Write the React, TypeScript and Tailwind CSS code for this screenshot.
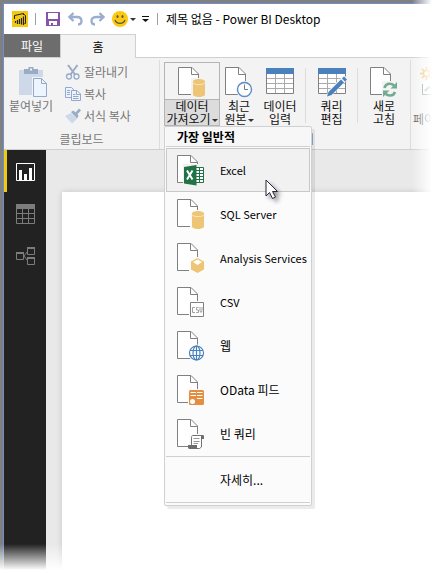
import type { ReactNode } from "react";

function PageIcon({ children }: { children?: ReactNode }) {
  return (
    <svg width="28" height="31" viewBox="0 0 28 31" fill="none" aria-hidden="true" className="shrink-0">
      <path d="M.5 .5H14L20.5 7V27.5H.5Z" fill="#fff" stroke="#808080" />
      <path d="M13.5 .5V7.5H20.5" stroke="#808080" />
      {children}
    </svg>
  );
}

function DatabaseIcon({ backdrop }: { backdrop: string }) {
  return (
    <PageIcon>
      <path d="M13 11h15v20H13z" fill={backdrop} />
      <path d="M15 15V27.5C15 30.8 27 30.8 27 27.5V15Z" fill="#eec475" />
      <ellipse cx="21" cy="14.500" rx="6" ry="2.600" fill="#eec475" />
      <path d="M15 15.500C15.500 18.300 26.500 18.300 27 15.500" stroke="#fae6bd" />
    </PageIcon>
  );
}

function ExcelIcon() {
  return (
    <PageIcon>
      <path d="M6 9h22v22H6z" fill="#f1f1f1" />
      <path d="M18.500 12.500h8v15h-8z" fill="#fff" stroke="#217346" />
      <path d="M19 15.500h7M19 18.500h7M19 21.500h7M19 24.500h7M22.500 13v14" stroke="#217346" />
      <path d="M7 12L19.500 10V30.500L7 28.500Z" fill="#217346" />
      <path d="M10 15.500L15.500 24.500M15.500 15.500L10 24.500" stroke="#fff" strokeWidth="2" />
    </PageIcon>
  );
}

function CubeIcon() {
  return (
    <PageIcon>
      <path d="M12 14h16v16H12z" fill="#fbfbfb" />
      <path d="M20.500 15L27 18.500V26.500L20.500 30L14 26.500V18.500Z" fill="#eec475" />
      <path d="M20.500 16.500L25 19L20.500 22L16 19Z" fill="#fff" />
    </PageIcon>
  );
}

function CsvIcon() {
  return (
    <PageIcon>
      <path d="M12 14h16v17H12z" fill="#fbfbfb" />
      <path d="M13.500 15.500h13v14h-13z" fill="#fff" stroke="#808080" />
      <path
        d="M18 20.500H15.500V25.500H18M21.500 20.500H19.500V23H21.500V25.500H19.200M23 20V24L24 25.500L25 24V20"
        stroke="#a0a0a0"
      />
    </PageIcon>
  );
}

function WebIcon() {
  return (
    <PageIcon>
      <circle cx="19.500" cy="22" r="8.500" fill="#fbfbfb" />
      <g stroke="#4a80bb" strokeWidth="1.200">
        <circle cx="19.500" cy="22" r="7" fill="#fff" />
        <ellipse cx="19.500" cy="22" rx="3.500" ry="7" />
        <path d="M13 19.500H26M13 24.500H26M19.500 15V29" />
      </g>
    </PageIcon>
  );
}

function ODataIcon() {
  return (
    <PageIcon>
      <path d="M11 14h17v16H11z" fill="#fbfbfb" />
      <rect x="12" y="15" width="15" height="15" rx="1.500" fill="#e48e42" />
      <path d="M13.500 17.500H19M20 17.500H25.500M13.500 20.500H19M20 20.500H25.500M20 23.500H25.500" stroke="#fff" />
      <circle cx="15.500" cy="26.500" r="2.500" fill="#fff" />
    </PageIcon>
  );
}

function ScriptIcon() {
  return (
    <PageIcon>
      <path d="M12 15h16v16H12z" fill="#fbfbfb" />
      <path d="M14.500 26V18.500C14.500 17 15 16.500 16 16.500H26.500V19.500H24.500V28L22.500 29.500H13Z" fill="#fff" stroke="#747474" />
      <path d="M16.500 19.500H22.500M16.500 22.500H22.500M16.500 24.500H21" stroke="#999" />
      <path d="M11 26H20V30H12.500C11.500 30 11 29 11 28ZM24 17H27V20H24Z" fill="#6c6c6c" />
    </PageIcon>
  );
}

function RecentIcon() {
  return (
    <PageIcon>
      <circle cx="19.500" cy="22.500" r="8.500" fill="#f3f3f3" />
      <circle cx="19.500" cy="22.500" r="7" fill="#fff" stroke="#5b8cc4" strokeWidth="1.400" />
      <path d="M19.500 17.500V22.500H23" stroke="#777" />
    </PageIcon>
  );
}

function RefreshIcon() {
  return (
    <PageIcon>
      <path d="M12 14h16v17H12z" fill="#f3f3f3" />
      <g stroke="#73ad91" strokeWidth="2.600">
        <path d="M14.500 21C15.500 16 22 15.500 24.500 19" />
        <path d="M25 25C23.500 29.500 17.500 29.500 15 26" />
      </g>
      <path d="M27 15V21.500H20.500ZM13 30V23.500H19.500Z" fill="#73ad91" />
    </PageIcon>
  );
}

function GridIcon({ pencil = false }: { pencil?: boolean }) {
  return (
    <svg width="30" height="31" viewBox="0 0 30 31" fill="none" aria-hidden="true">
      <path d="M1.500 1.500h27v25h-27z" fill="#fff" stroke="#808080" />
      <path d="M2 11.500H28M2 16.500H28M2 21.500H28M10.500 6V26M19.500 6V26" stroke="#aaa" />
      <path d="M1 1h28v6H1z" fill="#4a80bb" />
      {pencil && (
        <>
          <path d="M9 30L12 23L27 8L31 12L16 27Z" fill="#f3f3f3" />
          <path d="M10 29.500L11.500 25L24 12.500L27 15.500L14.500 28ZM25 11.500L27 9.500L30 12.500L28 14.500Z" fill="#4a80bb" />
        </>
      )}
    </svg>
  );
}

function PasteIcon() {
  return (
    <svg width="28" height="30" viewBox="0 0 28 30" fill="none" aria-hidden="true">
      <path d="M0 3h24v25H0z" fill="#cdd8e9" />
      <path d="M5 2H9.500V0H14.500V2H19V7H5Z" fill="#9aabc6" />
      <path d="M11 1.500h2v2h-2z" fill="#f3f3f3" />
      <path d="M13 10h15v20H13z" fill="#f3f3f3" />
      <path d="M14.500 11.500H22.500L27.500 16.500V29.500H14.500Z" fill="#edf4fd" stroke="#93a8ca" />
      <path d="M22.500 11.500V16.500H27.500" stroke="#93a8ca" />
    </svg>
  );
}

function CutIcon() {
  return (
    <svg width="16" height="16" viewBox="0 0 16 16" fill="none" stroke="#9aabc6" aria-hidden="true">
      <path d="M3 1L10 10.500M12.500 1L5.500 10.500" strokeWidth="2" />
      <circle cx="4" cy="12.500" r="2.500" fill="#edf4fd" strokeWidth="1.300" />
      <circle cx="11.500" cy="12.500" r="2.500" fill="#edf4fd" strokeWidth="1.300" />
    </svg>
  );
}

function CopyIcon() {
  return (
    <svg width="16" height="16" viewBox="0 0 16 16" fill="none" stroke="#93a8ca" aria-hidden="true">
      <path d="M.5 1.500H6.500L9.500 4.500V11.500H.5Z" fill="#edf4fd" />
      <path d="M2 4.500H5M2 6.500H5M2 8.500H5" />
      <path d="M6.500 4.500H12L15.500 8V14.500H6.500Z" fill="#edf4fd" />
      <path d="M11.500 4.500V8.500H15.500M8 8.500H10.500M8 10.500H13.500M8 12.500H13.500" />
    </svg>
  );
}

function BrushIcon() {
  return (
    <svg width="16" height="16" viewBox="0 0 16 16" aria-hidden="true">
      <path d="M0 8L6 5L12 11L7 15.500Z" fill="#cdd8e9" />
      <path d="M6 4L8.500 2.500L10.500 4.500L14 .5L16 2.500L12.500 6L13.500 8L12 10.500Z" fill="#9aabc6" />
    </svg>
  );
}

function LogoIcon() {
  return (
    <svg width="16" height="16" viewBox="0 0 16 16" fill="none" aria-hidden="true">
      <path d="M0 0h16v16H0z" fill="#f2c811" />
      <path d="M2.500 8V4.500L11.500 2.500V4M11.500 3L13.500 4.500V12.500H12.500" stroke="#222" />
      <path d="M3.500 10V12M5.500 9V13M7.500 8V13M9.500 7V13.500M11.500 5.500V14" stroke="#222" strokeWidth="1.200" />
    </svg>
  );
}

function SaveIcon() {
  return (
    <svg width="14" height="14" viewBox="0 0 14 14" aria-hidden="true">
      <path d="M0 0h14v14H0z" fill="#8654a8" />
      <path d="M2 1h10v6H2zM3 9h8v4H3z" fill="#fff" />
      <path d="M5 11h2v3H5z" fill="#8654a8" />
    </svg>
  );
}

function UndoIcon({ flip = false }: { flip?: boolean }) {
  return (
    <svg width="15" height="14" viewBox="0 0 15 14" fill="none" stroke="#9aafcf" strokeWidth="2.300" aria-hidden="true">
      {flip ? (
        <path d="M9.500 1L13.500 5L9.500 9M13 5H6C2.500 5 1.500 7 1.500 9C1.500 11 3 12.500 5 12.500" />
      ) : (
        <path d="M5.500 1L1.500 5L5.500 9M2 5H9C12.500 5 13.500 7 13.500 9C13.500 11 12 12.500 10 12.500" />
      )}
    </svg>
  );
}

function SmileIcon() {
  return (
    <svg width="16" height="16" viewBox="0 0 16 16" fill="none" aria-hidden="true">
      <circle cx="8" cy="8" r="8" fill="#fbc90e" />
      <ellipse cx="5.500" cy="5.500" rx="1" ry="1.600" fill="#555" />
      <ellipse cx="10.500" cy="5.500" rx="1" ry="1.600" fill="#555" />
      <path d="M3 9C4.500 13.500 11.500 13.500 13 9" stroke="#555" strokeWidth="1.200" />
    </svg>
  );
}

function Caret({ className = "" }: { className?: string }) {
  return (
    <svg width="6" height="3" viewBox="0 0 6 3" aria-hidden="true" className={className}>
      <path d="M0 0H6L3 3Z" fill="#333" />
    </svg>
  );
}

function TitleBar() {
  return (
    <header className="flex h-[30px] items-center bg-white pl-2">
      <LogoIcon />
      <span className="ml-[7px] h-3 w-px bg-[#a0a0a0]" />
      <button aria-label="저장" className="ml-[10px]"><SaveIcon /></button>
      <button aria-label="실행 취소" className="ml-2"><UndoIcon /></button>
      <button aria-label="다시 실행" className="ml-[7px]"><UndoIcon flip /></button>
      <button aria-label="피드백" className="ml-[7px] flex items-center gap-[2px]"><SmileIcon /><Caret /></button>
      <button aria-label="사용자 지정" className="ml-[6px]">
        <svg width="7" height="6" viewBox="0 0 7 6" aria-hidden="true">
          <path d="M0 0H7V1H0ZM0 3H7L3.500 6Z" fill="#111" />
        </svg>
      </button>
      <span className="ml-2 h-3 w-px bg-[#a0a0a0]" />
      <h1 className="ml-2 whitespace-nowrap text-[12px] leading-4 text-black">제목 없음 - Power BI Desktop</h1>
    </header>
  );
}

function Tabs() {
  return (
    <nav className="flex h-6 bg-white">
      <button className="w-14 border-b border-[#d0d0d0] bg-[#6d6d6d] text-white">파일</button>
      <button className="w-[76px] border-x border-t border-[#d0d0d0] bg-[#f3f3f3] text-black">홈</button>
      <span className="flex-1 border-b border-[#d0d0d0]" />
    </nav>
  );
}

function RibbonButton({ icon, label, caret, className }: { icon: ReactNode; label: string; caret?: boolean; className: string }) {
  return (
    <button className={`flex shrink-0 flex-col items-center ${className}`}>
      <span className="flex h-8 justify-center">{icon}</span>
      <span className="text-center leading-[13px] whitespace-pre text-[#111]">
        {label}
        {caret && <Caret className="ml-px inline-block" />}
      </span>
    </button>
  );
}

const sources = [
  { label: "SQL Server", icon: <DatabaseIcon backdrop="#fbfbfb" />, size: "text-[11px]" },
  { label: "Analysis Services", icon: <CubeIcon />, size: "text-[11px]" },
  { label: "CSV", icon: <CsvIcon />, size: "text-[11px]" },
  { label: "웹", icon: <WebIcon />, size: "text-[12px]" },
  { label: "OData 피드", icon: <ODataIcon />, size: "text-[12px]" },
  { label: "빈 쿼리", icon: <ScriptIcon />, size: "text-[12px]" },
];

function Pointer() {
  return (
    <svg width="20" height="24" viewBox="0 0 20 24" aria-hidden="true" className="absolute top-[31px] left-[99px] drop-shadow-[3px_3px_2px_rgba(0,0,0,0.4)]">
      <path d="M1 1V17L4.500 13.500L7.500 19.500L10.500 18L7.500 12.500H12.500Z" fill="#fff" stroke="#26263c" />
    </svg>
  );
}

function SourceMenu() {
  return (
    <div role="menu" className="absolute top-[63px] -left-px z-10 w-[148px] rounded-[2px] border border-[#d0d0d0] bg-[#fbfbfb] px-px pb-[2px] text-black shadow-[3px_3px_0_rgba(0,0,0,0.08)]">
      <p className="mb-px h-5 border-b border-[#d0d0d0] bg-[#f7f7f7] pl-[11px] leading-[19px] font-bold">가장 일반적</p>
      <div className="relative">
        <button role="menuitem" className="flex h-11 w-full items-center gap-[15px] border border-[#c8c8c8] bg-[#f1f1f1] pl-[10px] text-[11px]">
          <ExcelIcon />
          Excel
        </button>
        <Pointer />
      </div>
      {sources.map((s) => (
        <button key={s.label} role="menuitem" className={`flex h-11 w-full items-center gap-[15px] pl-[11px] whitespace-nowrap ${s.size}`}>
          {s.icon}
          {s.label}
        </button>
      ))}
      <button role="menuitem" className="flex h-[47px] w-full items-center border-y border-[#d0d0d0] pl-[54px]">
        자세히...
      </button>
    </div>
  );
}

function Ribbon() {
  return (
    <section className="flex h-[92px] border-b border-[#cfcfcf] bg-[#f3f3f3] pt-[2px]">
      <div className="flex w-[155px] shrink-0 flex-col">
        <div className="flex h-[70px] text-[#777]">
          <button className="ml-1 flex w-[46px] flex-col items-center pt-[7px] whitespace-nowrap">
            <span className="h-8 pl-1"><PasteIcon /></span>
            <span className="leading-[13px]">붙여넣기</span>
          </button>
          <div className="ml-[11px] flex flex-col pt-px">
            <button className="flex h-[22px] items-center gap-[3px] whitespace-nowrap"><CutIcon />잘라내기</button>
            <button className="flex h-[22px] items-center gap-[3px] whitespace-nowrap"><CopyIcon />복사</button>
            <button className="flex h-[22px] items-center gap-[3px] whitespace-nowrap"><BrushIcon />서식 복사</button>
          </div>
        </div>
        <p className="text-center leading-[18px] text-[#777]">클립보드</p>
      </div>
      <div className="w-[252px] shrink-0 border-x border-[#dcdcdc]">
        <div className="flex h-[70px]">
          <div className="relative ml-1 mt-[2px] h-16 w-14 shrink-0 border border-[#b4b4b4] bg-[linear-gradient(to_bottom,#f3f3f3_36px,#b4b4b4_36px,#b4b4b4_37px,#dcdcdc_37px)]">
            <RibbonButton icon={<DatabaseIcon backdrop="#f3f3f3" />} label={"데이터\n가져오기"} caret className="w-full pt-1" />
            <SourceMenu />
          </div>
          <RibbonButton icon={<RecentIcon />} label={"최근\n원본"} caret className="w-[38px] pt-[7px]" />
          <RibbonButton icon={<GridIcon />} label={"데이터\n입력"} className="w-11 pt-[7px]" />
          <span className="mt-2 ml-[3px] h-[55px] w-px bg-[#dcdcdc]" />
          <RibbonButton icon={<GridIcon pencil />} label={"쿼리\n편집"} className="w-[51px] pt-[7px]" />
          <span className="mt-2 h-[55px] w-px bg-[#dcdcdc]" />
          <RibbonButton icon={<RefreshIcon />} label={"새로\n고침"} className="w-[52px] pt-[7px]" />
        </div>
        <p className="text-center leading-[18px] text-[#777]">외부 데이터</p>
      </div>
      <button className="flex shrink-0 flex-col items-start pt-[7px] pl-[2px] text-[#555]">
        <svg width="30" height="31" viewBox="0 0 30 31" fill="none" aria-hidden="true" className="ml-[7px]">
          <path d="M2.500 17V27.500H28V7.500H14" fill="#fff" stroke="#808080" />
          <path d="M5 24L9 20L13 22" stroke="#73ad91" strokeWidth="2" />
          <path d="M6.500 0V13M0 6.500H13M2 2L11 11M11 2L2 11" stroke="#efb040" strokeWidth="1.500" />
          <circle cx="6.500" cy="6.500" r="3" fill="#fff" stroke="#efb040" strokeWidth="1.500" />
        </svg>
        <span className="mt-[14px] leading-[13px] whitespace-nowrap">페이</span>
      </button>
    </section>
  );
}

function Sidebar() {
  return (
    <nav className="flex w-[42px] shrink-0 flex-col bg-[#222]">
      <button aria-label="보고서" className="flex h-[42px] items-center border-l-[3px] border-[#f2c811] pt-px pl-[9px]">
        <svg width="19" height="18" viewBox="0 0 19 18" fill="none" aria-hidden="true">
          <path d="M.5 .5h18v17H.5z" stroke="#fff" />
          <path d="M3 7h3v10H3zM8 11h3v6H8zM13 5h3v12h-3z" fill="#fff" />
        </svg>
      </button>
      <button aria-label="데이터" className="flex h-[42px] items-center pt-[2px] pl-3">
        <svg width="19" height="20" viewBox="0 0 19 20" fill="none" stroke="#7c7c7c" aria-hidden="true">
          <path d="M.5 .5h18v19H.5zM0 9.500H19M0 14.500H19M6.500 4V20M12.500 4V20" />
          <path d="M0 0h19v5H0z" fill="#7c7c7c" stroke="none" />
        </svg>
      </button>
      <button aria-label="관계" className="flex h-[42px] items-center pt-[2px] pl-3">
        <svg width="19" height="18" viewBox="0 0 19 18" fill="none" stroke="#7c7c7c" aria-hidden="true">
          <path d="M.5 5.500h7v7h-7zM11.500 .5h7v7h-7zM11.500 10.500h7v7h-7z" />
          <path d="M0 6H8M11 1H19M11 11H19" strokeWidth="2" />
          <path d="M8 9L11 5M8 9L11 13" />
        </svg>
      </button>
    </nav>
  );
}

export default function App() {
  return (
    <div className="relative flex min-h-screen flex-col overflow-hidden bg-[#808080] pt-[3px] pl-[3px] font-['Noto_Sans_CJK_KR',sans-serif] text-[12px] leading-4">
      <div className="flex flex-1 flex-col border-t border-l border-[#6a90cf]">
        <TitleBar />
        <Tabs />
        <Ribbon />
        <main className="flex flex-1 bg-[#e9e9e9]">
          <Sidebar />
          <section className="mt-[42px] ml-4 flex-1 bg-white shadow-[0_0_6px_rgba(0,0,0,0.15)]" />
        </main>
      </div>
      <div className="pointer-events-none absolute inset-y-0 right-0 z-20 w-[22px] bg-linear-to-r from-transparent to-white to-90%" />
      <div className="pointer-events-none absolute inset-x-0 bottom-0 z-20 h-[29px] bg-linear-to-b from-transparent to-white to-90%" />
    </div>
  );
}
